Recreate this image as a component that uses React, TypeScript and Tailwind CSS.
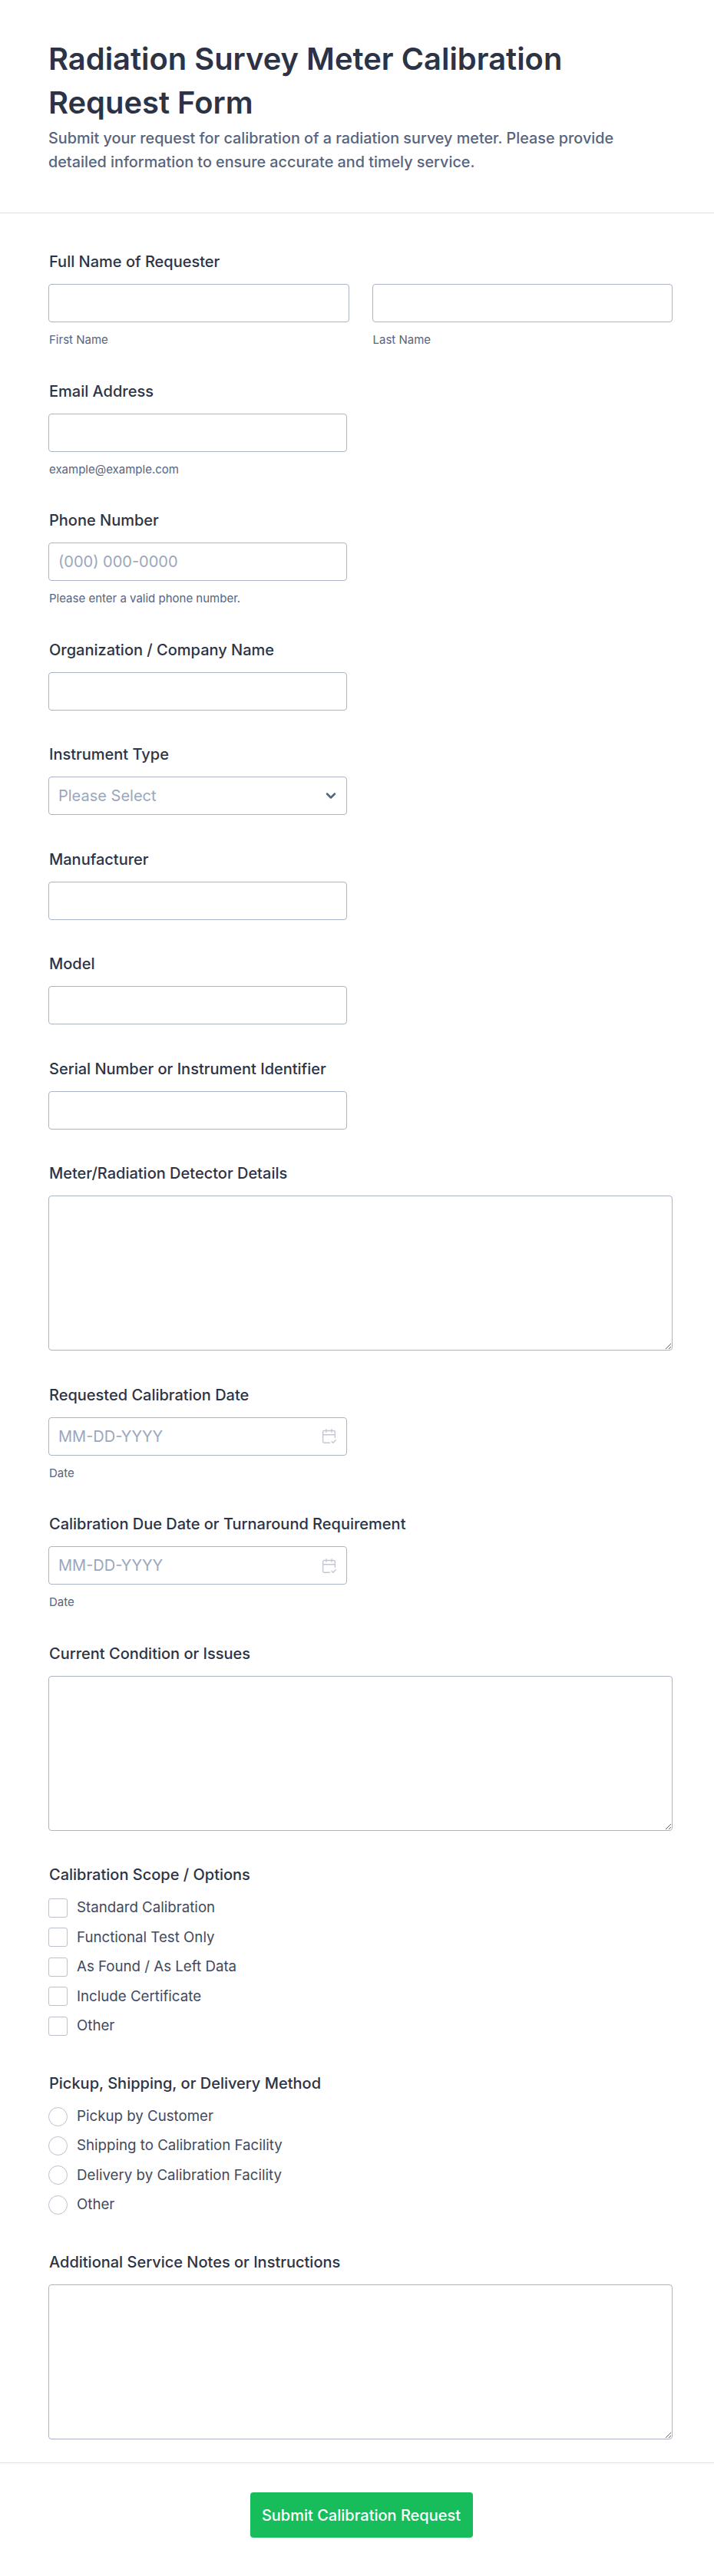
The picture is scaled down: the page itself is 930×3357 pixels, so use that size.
import React from 'react';
import { CalendarCheck2, ChevronDown } from 'lucide-react';

const inputClass =
  'w-full h-[50px] px-3 rounded-[4px] border border-[#adb3c6] bg-white text-[20px] text-[#2c3345] placeholder:text-[#9aa7bd] outline-none';

const Label: React.FC<{ children: React.ReactNode }> = ({ children }) => (
  <label className="block h-6 mb-[17px] ml-px text-[20px] leading-6 font-medium text-[#2c3345]">{children}</label>
);

const Sub: React.FC<{ children: React.ReactNode }> = ({ children }) => (
  <div className="mt-[14px] ml-px h-[18px] text-[15px] leading-[18px] text-[#57647e]">{children}</div>
);

const TextField: React.FC<{ label: string; placeholder?: string; sub?: string }> = ({ label, placeholder, sub }) => (
  <div>
    <Label>{label}</Label>
    <div className="w-[389px]">
      <input className={inputClass} placeholder={placeholder} />
    </div>
    {sub && <Sub>{sub}</Sub>}
  </div>
);

const AreaField: React.FC<{ label: string }> = ({ label }) => (
  <div>
    <Label>{label}</Label>
    <textarea className="block w-[813px] h-[202px] p-3 rounded-[4px] border border-[#adb3c6] bg-white outline-none resize-y" />
  </div>
);

const DateField: React.FC<{ label: string }> = ({ label }) => (
  <div>
    <Label>{label}</Label>
    <div className="w-[389px] h-[50px] pl-3 pr-[12px] flex items-center justify-between rounded-[4px] border border-[#adb3c6] bg-white">
      <span className="text-[20px] text-[#9aa7bd]">MM-DD-YYYY</span>
      <CalendarCheck2 className="w-[21px] h-[21px] text-[#c3c7d3]" strokeWidth={1.6} />
    </div>
    <Sub>Date</Sub>
  </div>
);

const OptionList: React.FC<{ label: string; options: string[]; round?: boolean }> = ({ label, options, round }) => (
  <div className="pb-[4.5px]">
    <Label>{label}</Label>
    <div className="flex flex-col gap-[13.4px] pt-[2px]">
      {options.map((option) => (
        <div key={option} className="flex items-center gap-[12px] h-[25px]">
          <span className={`w-[25px] h-[25px] shrink-0 border border-[#bcc1cf] bg-white ${round ? 'rounded-full' : 'rounded-[3px]'}`} />
          <span className="text-[18.7px] text-[#3f4a60]">{option}</span>
        </div>
      ))}
    </div>
  </div>
);

export default function App() {
  return (
    <div className="w-[930px] h-[3357px] bg-white font-['Inter',sans-serif]">
      <header className="h-[278px] pt-12 px-[63px] border-b border-[#dfe1ee]">
        <h1 className="text-[39.9px] leading-[57px] font-semibold text-[#2c3345]">
          Radiation Survey Meter Calibration Request Form
        </h1>
        <p className="mt-[3px] text-[19.8px] leading-[31px] font-medium text-[#57647e]">
          Submit your request for calibration of a radiation survey meter. Please provide detailed information to ensure accurate and timely service.
        </p>
      </header>

      <main className="h-[2932px] pt-[51px] px-[63px] flex flex-col gap-[45.5px] border-b border-[#dfe1ee]">
        <div>
          <Label>Full Name of Requester</Label>
          <div className="grid grid-cols-2 gap-[30px] w-[813px]">
            <div>
              <input className={inputClass} />
              <Sub>First Name</Sub>
            </div>
            <div>
              <input className={inputClass} />
              <Sub>Last Name</Sub>
            </div>
          </div>
        </div>

        <TextField label="Email Address" sub="example@example.com" />
        <TextField label="Phone Number" placeholder="(000) 000-0000" sub="Please enter a valid phone number." />
        <TextField label="Organization / Company Name" />

        <div>
          <Label>Instrument Type</Label>
          <div className="w-[389px] h-[50px] pl-3 pr-[10px] flex items-center justify-between rounded-[4px] border border-[#adb3c6] bg-white">
            <span className="text-[20px] text-[#9aa7bd]">Please Select</span>
            <ChevronDown className="w-5 h-5 text-[#57647e]" strokeWidth={3} />
          </div>
        </div>

        <TextField label="Manufacturer" />
        <TextField label="Model" />
        <TextField label="Serial Number or Instrument Identifier" />
        <AreaField label="Meter/Radiation Detector Details" />
        <DateField label="Requested Calibration Date" />
        <DateField label="Calibration Due Date or Turnaround Requirement" />
        <AreaField label="Current Condition or Issues" />
        <OptionList
          label="Calibration Scope / Options"
          options={['Standard Calibration', 'Functional Test Only', 'As Found / As Left Data', 'Include Certificate', 'Other']}
        />
        <OptionList
          round
          label="Pickup, Shipping, or Delivery Method"
          options={['Pickup by Customer', 'Shipping to Calibration Facility', 'Delivery by Calibration Facility', 'Other']}
        />
        <AreaField label="Additional Service Notes or Instructions" />
      </main>

      <footer className="flex justify-center pt-[38px] pl-[11px]">
        <button className="w-[290px] h-[59px] rounded-[4px] bg-[#18bd5b] text-white text-[20px] font-medium">
          Submit Calibration Request
        </button>
      </footer>
    </div>
  );
}
